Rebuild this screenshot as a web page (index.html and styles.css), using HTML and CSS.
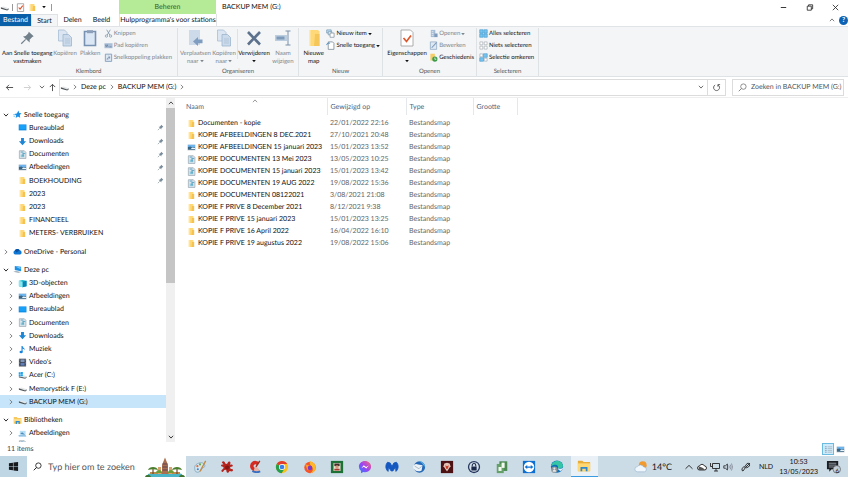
FILE: index.html
```html
<!DOCTYPE html>
<html lang="nl">
<head>
  <meta charset="UTF-8" />
  <meta name="viewport" content="width=device-width, initial-scale=1" />
  <title>BACKUP MEM (G:)</title>
  <link rel="stylesheet" href="styles.css">
</head>
<body>

  <!-- shared icons -->
  <svg class="sprite" aria-hidden="true">
    <symbol id="i-folder" viewBox="0 0 10 10"><path d="M2 1h4.5l.8.8V9H2z" fill="#ffd978"/><path d="M5.5 3.2H8V9H5z" fill="#f6c250"/><path d="M2 1h1v8H2z" fill="#ffe7a6"/></symbol>
    <symbol id="i-picture" viewBox="0 0 10 10"><path d="M.5 1.5h9v7h-9z" fill="#d7dde2"/><path d="M1 2h8v3H1z" fill="#6cb4ee"/><path d="M1 4.4l3-.6 2 1.4 3-.4V7.6H1z" fill="#3a6685"/><path d="M4.5 5.6H9v1.2H5z" fill="#eaf5fb"/></symbol>
    <symbol id="i-document" viewBox="0 0 10 10"><path d="M1.5.8H7L8.8 2.6v6.8H1.5z" fill="#dfe7ec" stroke="#8c9ca7" stroke-width=".7"/><path d="M3 2.3h3M5 3.8h3" stroke="#3f97bd" stroke-width=".9"/><path d="M3 5h4v3H3z" fill="#8fcbe0"/><path d="M5.6 4.2v3" stroke="#2d7f9f" stroke-width=".8"/></symbol>
    <symbol id="i-desktop" viewBox="0 0 10 10"><path d="M.8 1.6h8.6v6.6H.8z" fill="#0d87e0"/><path d="M1.4 2.2h7.4v4.9H1.4z" fill="#16a0f8"/></symbol>
    <symbol id="i-download" viewBox="0 0 10 10"><path d="M3.4 1h3.2v3.6H9L5 9.2 1 4.6h2.4z" fill="#1e86d6"/></symbol>
    <symbol id="i-star" viewBox="0 0 10 10"><path d="M6 .6l.9 2.6 2.6.5-2 1.8.5 3-2.5-1.3L3 8.8l.5-2.6-2-1.8 2.8-.6z" fill="#1a8fe6"/><path d="M.2 5.2h2.3M.6 7h1.8" stroke="#55b4f2" stroke-width=".8"/></symbol>
    <symbol id="i-cloud" viewBox="0 0 10 10"><path d="M2.4 8.4A2.3 2.3 0 0 1 2 4 3 3 0 0 1 7.4 3.6 2.5 2.5 0 0 1 8 8.4z" fill="#0f78d4"/><path d="M2 4A3 3 0 0 1 7.4 3.6L4 6z" fill="#0a4fa3"/></symbol>
    <symbol id="i-pc" viewBox="0 0 10 10"><path d="M2 1l7 1v5l-7-1.4z" fill="#1c8fe3"/><path d="M2.6 1.7l5.8.9v2z" fill="#72c4fa"/><path d="M.3 7.5l3-1 5.5 1.2-2.6 1.3z" fill="#a9b7c0"/></symbol>
    <symbol id="i-cube" viewBox="0 0 10 10"><path d="M1 2l4-1 4.5 1v6L5 9.3 1 8z" fill="#21bccd"/><path d="M5 3l4.5-1v6L5 9.3z" fill="#0a84b6"/><path d="M1 2l4 1v6.3L1 8z" fill="#8be6ef"/></symbol>
    <symbol id="i-music" viewBox="0 0 10 10"><path d="M4.5 1v6.5" stroke="#1784dd" stroke-width="1.2"/><path d="M4.5.8C5 3 8 3 7.3 6 7 4.8 6 4.3 4.5 4z" fill="#1784dd"/><ellipse cx="3.5" cy="7.8" rx="1.8" ry="1.4" fill="#1784dd"/></symbol>
    <symbol id="i-video" viewBox="0 0 10 10"><path d="M1 .8h8v8.6H1z" fill="#3a3f4a"/><path d="M2.8 1.5h4.5v3H2.8z" fill="#8398bd"/><path d="M2.8 5.3h4.5v3.2H2.8z" fill="#5c7cba"/><path d="M1.8 1.2v8M8.2 1.2v8" stroke="#c6ccd4" stroke-width=".6" stroke-dasharray=".8"/></symbol>
    <symbol id="i-drive" viewBox="0 0 10 10"><path d="M1 4.8l3-1 5.6 2L8 7.2z" fill="#e3e6e8"/><path d="M1 4.8L8 7.2l1.6-1.4v1.3L8 8.4 1 6.3z" fill="#4d5357"/></symbol>
    <symbol id="i-windrive" viewBox="0 0 10 10"><path d="M1 4.8l3-1 5.6 2L8 7.2z" fill="#e3e6e8"/><path d="M1 5.8L8 7.4l1.6-1.2v1L8 8.7 1 7.2z" fill="#5b6368"/><path d="M.8 1.4h2v2h-2zM3.1 1.2h2.3v2.2H3.1zM.8 3.7h2v2h-2zM3.1 3.7h2.3v2.2H3.1z" fill="#1fa3ea"/></symbol>
    <symbol id="i-library" viewBox="0 0 10 10"><path d="M.8 1.2h3.4l.8 1h4.3v6.5H.8z" fill="#f7c95c"/><path d="M.8 3.5h8.5V6H.8z" fill="#ffdf8c"/><path d="M3 9V5.5h4.5V9H6.2V7H4.4v2z" fill="#2f8bd0"/></symbol>
    <symbol id="i-pictures" viewBox="0 0 10 10"><path d="M2 2h6.5v4.5H2z" fill="#b8def6"/><path d="M2.5 5.5l2-2 3.5 3z" fill="#4d8cba"/><path d="M.5 7h8l.8 1.3H1z" fill="#6fb0dc"/></symbol>
    <symbol id="i-pin" viewBox="0 0 10 10"><path d="M6 1.2L9 4l-1 .5L6.3 6.2 6.2 8 2.2 4l1.8-.2L5.6 2.2z" fill="#788c9b"/><path d="M3.8 6.2L1.2 8.8" stroke="#788c9b" stroke-width=".9"/></symbol>
    <symbol id="i-right" viewBox="0 0 10 10"><path d="M3 1.5L6.8 5 3 8.5" fill="none" stroke="currentColor" stroke-width="1.3"/></symbol>
    <symbol id="i-down" viewBox="0 0 10 10"><path d="M1.5 3L5 6.8 8.5 3" fill="none" stroke="currentColor" stroke-width="1.6"/></symbol>
    <symbol id="i-up" viewBox="0 0 10 10"><path d="M1.5 7L5 3.2 8.5 7" fill="none" stroke="currentColor" stroke-width="1.4"/></symbol>
    <symbol id="i-tri" viewBox="0 0 4 4"><path d="M.2 1h3.6L2 3.2z" fill="currentColor"/></symbol>
    <symbol id="i-search" viewBox="0 0 10 10"><circle cx="6" cy="4" r="3" fill="none" stroke="currentColor" stroke-width=".9"/><path d="M3.9 6.1L.8 9.2" stroke="currentColor" stroke-width="1"/></symbol>
    <symbol id="i-copy" viewBox="0 0 16 18"><path d="M1.5 1h6l2.5 2.5V12H1.5z" fill="#dbe6f2" stroke="#a9bed4" stroke-width=".8"/><path d="M6 5.5h5.5L14.5 8.5V17H6z" fill="#cbdbeb" stroke="#9db5ce" stroke-width=".8"/><path d="M8 10h5M8 12h5M8 14h5" stroke="#a9bed4" stroke-width=".7"/></symbol>
  </svg>

  <header class="titlebar">
    <div class="quick">
      <svg class="ico"><use href="#i-drive"/></svg>
      <span class="bar"></span>
      <button aria-label="Eigenschappen"><svg class="ico" viewBox="0 0 10 10"><path d="M1.5.8h7v8.6h-7z" fill="#fff" stroke="#8b8b8b" stroke-width=".8"/><path d="M3 5l1.5 1.8L7.5 3" fill="none" stroke="#e0562b" stroke-width="1.3"/></svg></button>
      <button aria-label="Nieuwe map"><svg class="ico"><use href="#i-folder"/></svg></button>
      <button aria-label="Aanpassen"><svg class="tri"><use href="#i-tri"/></svg></button>
      <span class="bar"></span>
    </div>
    <div class="context">Beheren</div>
    <h1>BACKUP MEM (G:)</h1>
    <div class="window-buttons">
      <button aria-label="Minimaliseren"><svg class="ico" viewBox="0 0 10 10"><path d="M2 5h6" stroke="#222"/></svg></button>
      <button aria-label="Verkleinen"><svg class="ico" viewBox="0 0 10 10"><path d="M2.5 3.5h4.5V8H2.5zM4 3.5V2h4.5v4.5H7" fill="none" stroke="#222" stroke-width=".9"/></svg></button>
      <button aria-label="Sluiten"><svg class="ico" viewBox="0 0 10 10"><path d="M2 2l6 6M8 2L2 8" stroke="#222" stroke-width=".9"/></svg></button>
    </div>
  </header>

  <nav class="tabs">
    <button class="tab file">Bestand</button>
    <button class="tab active">Start</button>
    <button class="tab">Delen</button>
    <button class="tab">Beeld</button>
    <button class="tab tools">Hulpprogramma's voor stations</button>
    <div class="help">
      <button aria-label="Lint inklappen"><svg class="chev"><use href="#i-up"/></svg></button>
      <button class="question" aria-label="Help">?</button>
    </div>
  </nav>

  <section class="ribbon">
    <div class="group clipboard">
      <div class="tools-row">
        <button class="big wide"><svg viewBox="0 0 18 18"><path d="M11 2l5.5 5-1.6.8-3 3.2.2 3L4.5 7.2l3-.4L10.3 4z" fill="#72808b"/><path d="M7.5 10.5L2.5 15.5" stroke="#72808b" stroke-width="1.3"/></svg><span>Aan Snelle toegang<br>vastmaken</span></button>
        <button class="big off"><svg viewBox="0 0 16 18"><use href="#i-copy"/></svg><span>Kopiëren</span></button>
        <button class="big off"><svg viewBox="0 0 16 18"><path d="M2.5 2.5h11v14h-11z" fill="#dbe7f5" stroke="#7892b4" stroke-width="1.6"/><path d="M5 1.2h6v3H5z" fill="#8d9fb8"/></svg><span>Plakken</span></button>
        <div class="smalls">
          <button class="off"><svg class="ico" viewBox="0 0 10 10"><path d="M3 .8l3.5 6M7 .8l-3.5 6" stroke="#7f95ad" stroke-width=".9"/><circle cx="2.7" cy="7.8" r="1.3" fill="none" stroke="#7f95ad" stroke-width=".8"/><circle cx="7.3" cy="7.8" r="1.3" fill="none" stroke="#7f95ad" stroke-width=".8"/></svg>Knippen</button>
          <button class="off"><svg class="ico" viewBox="0 0 10 10"><path d="M.5 2.5h9v5.5h-9z" fill="#a9bed6"/><path d="M1.5 4l1 2.5L3.5 4l1 2.5M6 6.5h2.5" fill="none" stroke="#5b7698" stroke-width=".7"/></svg>Pad kopiëren</button>
          <button class="off"><svg class="ico" viewBox="0 0 10 10"><path d="M1.5 1.3h7v8h-7z" fill="#dde8f3" stroke="#7892b4" stroke-width=".9"/><path d="M3.5 7.5c0-2 1-2.5 2.5-2.5M5 3.5L6.8 5 5 6.5" fill="none" stroke="#5b7698" stroke-width=".8"/></svg>Snelkoppeling plakken</button>
        </div>
      </div>
      <div class="caption">Klembord</div>
    </div>

    <div class="group organise">
      <div class="tools-row">
        <button class="big off"><svg viewBox="0 0 16 18"><path d="M2 1h11v15H2z" fill="#ccdae9"/><path d="M15.5 10.5H11V8l-5 4.5 5 4.5v-2.7h4.5z" fill="#7f9dc0"/></svg><span>Verplaatsen<br>naar <svg class="tri"><use href="#i-tri"/></svg></span></button>
        <button class="big off"><svg viewBox="0 0 16 18"><use href="#i-copy"/></svg><span>Kopiëren<br>naar <svg class="tri"><use href="#i-tri"/></svg></span></button>
        <span class="split"></span>
        <button class="big"><svg viewBox="0 0 16 18"><path d="M2 3l12 12.5M14 3L2 15.5" stroke="#5d728d" stroke-width="2.6"/></svg><span>Verwijderen<br><svg class="tri"><use href="#i-tri"/></svg></span></button>
        <button class="big off"><svg viewBox="0 0 16 18"><path d="M0 6h12v6H0z" fill="#bccde0"/><path d="M1.5 7.5h8v3h-8z" fill="#7e9abb"/><path d="M10.5 2h5M13 2v14M10.5 16h5" stroke="#7d91aa" fill="none"/></svg><span>Naam<br>wijzigen</span></button>
      </div>
      <div class="caption">Organiseren</div>
    </div>

    <div class="group new">
      <div class="tools-row">
        <button class="big"><svg viewBox="0 0 16 18"><path d="M3 1h9l1.5 1.5V17H3z" fill="#ffd978"/><path d="M9 5h4.5v12H8z" fill="#f5c65a"/><path d="M3 1h1.5v16H3z" fill="#ffe9ae"/></svg><span>Nieuwe<br>map</span></button>
        <div class="smalls">
          <button><svg class="ico" viewBox="0 0 10 10"><path d="M.8 1h5v3.5h-5z" fill="#c8dff0" stroke="#5e8baa" stroke-width=".7"/><path d="M2.5 3h4v3.5h-4z" fill="#e8f2f8" stroke="#5e8baa" stroke-width=".7"/><path d="M4.5 4.5H9v4.7H4.5z" fill="#fff" stroke="#6e7f8b" stroke-width=".7"/></svg>Nieuw item <svg class="tri"><use href="#i-tri"/></svg></button>
          <button><svg class="ico" viewBox="0 0 10 10"><path d="M2.5 1h4.8l1.5 1.5v6.8H2.5z" fill="#fff" stroke="#6e7f8b" stroke-width=".8"/><path d="M.8 4.5C1 2 3 2 4.5 2.5" fill="none" stroke="#3985c4" stroke-width="1"/></svg>Snelle toegang <svg class="tri"><use href="#i-tri"/></svg></button>
        </div>
      </div>
      <div class="caption">Nieuw</div>
    </div>

    <div class="group open">
      <div class="tools-row">
        <button class="big"><svg viewBox="0 0 16 18"><path d="M2 1h9.5L14 3.5V17H2z" fill="#fff" stroke="#9b9b9b" stroke-width=".8"/><path d="M4.5 9l3 3.5L12 6.5" fill="none" stroke="#e0562b" stroke-width="1.7"/></svg><span>Eigenschappen<br><svg class="tri"><use href="#i-tri"/></svg></span></button>
        <div class="smalls">
          <button class="off"><svg class="ico" viewBox="0 0 10 10"><path d="M2 1h5v8H2z" fill="#a7bdd5"/><path d="M3 3h2M3 5h2M3 7h2" stroke="#eef3f8" stroke-width=".8"/><path d="M6 5h3.5v4H6z" fill="#7e9abb"/></svg>Openen <svg class="tri"><use href="#i-tri"/></svg></button>
          <button class="off"><svg class="ico" viewBox="0 0 10 10"><path d="M1.5 1h7v8.3h-7z" fill="#dfe9f3" stroke="#8aa4c0" stroke-width=".8"/><path d="M3 7.5L8.5 1.5" stroke="#7e9abb" stroke-width="1.2"/></svg>Bewerken</button>
          <button><svg class="ico" viewBox="0 0 10 10"><path d="M1.5.8h5v7.5h-5z" fill="#f7cd68"/><circle cx="6.5" cy="6.7" r="2.9" fill="#3d9b4a"/><path d="M6.5 5v2h1.6" fill="none" stroke="#fff" stroke-width=".8"/></svg>Geschiedenis</button>
        </div>
      </div>
      <div class="caption">Openen</div>
    </div>

    <div class="group select">
      <div class="tools-row">
        <div class="smalls">
          <button><svg class="ico" viewBox="0 0 10 10"><path d="M.8.8h3.8v3.8H.8zM5.4.8h3.8v3.8H5.4zM.8 5.4h3.8v3.8H.8zM5.4 5.4h3.8v3.8H5.4z" fill="#76c3ee" stroke="#3d93c8" stroke-width=".6"/></svg>Alles selecteren</button>
          <button><svg class="ico" viewBox="0 0 10 10"><path d="M1 1h3.2v3.2H1zM5.8 1H9v3.2H5.8zM1 5.8h3.2V9H1zM5.8 5.8H9V9H5.8z" fill="#fff" stroke="#a3a9ae" stroke-width=".7"/></svg>Niets selecteren</button>
          <button><svg class="ico" viewBox="0 0 10 10"><path d="M1 1h3.2v3.2H1zM5.8 5.8H9V9H5.8z" fill="#fff" stroke="#92a6b5" stroke-width=".7"/><path d="M5 .8h4.2v4H5zM.8 5.2h4.2v4H.8z" fill="#76c3ee" stroke="#3d93c8" stroke-width=".6"/></svg>Selectie omkeren</button>
        </div>
      </div>
      <div class="caption">Selecteren</div>
    </div>
  </section>

  <div class="navbar">
    <div class="arrows">
      <button aria-label="Terug"><svg class="ico" viewBox="0 0 10 10"><path d="M9 5H1.5M4.5 2L1.5 5l3 3" fill="none" stroke="#444"/></svg></button>
      <button aria-label="Vooruit"><svg class="ico" viewBox="0 0 10 10"><path d="M1 5h7.5M5.5 2l3 3-3 3" fill="none" stroke="#ccc"/></svg></button>
      <button class="narrow" aria-label="Recente locaties"><svg class="chev"><use href="#i-down"/></svg></button>
      <button class="narrow" aria-label="Omhoog"><svg class="ico" viewBox="0 0 10 10"><path d="M5 9V1.5M2 4.5l3-3 3 3" fill="none" stroke="#444"/></svg></button>
    </div>
    <div class="address">
      <svg class="ico"><use href="#i-drive"/></svg>
      <svg class="chev"><use href="#i-right"/></svg>
      <a href="#">Deze pc</a>
      <svg class="chev"><use href="#i-right"/></svg>
      <a href="#">BACKUP MEM (G:)</a>
      <svg class="chev"><use href="#i-right"/></svg>
      <button class="history" aria-label="Vorige locaties"><svg class="chev"><use href="#i-down"/></svg></button>
      <button class="refresh" aria-label="Vernieuwen"><svg class="ico" viewBox="0 0 10 10"><path d="M3.5 2.2A3.3 3.3 0 1 0 6.8 2.3M6.5 4V1.8H9" fill="none" stroke="#444" stroke-width=".9"/></svg></button>
    </div>
    <label class="search">
      <svg class="ico"><use href="#i-search"/></svg>
      <input type="text" placeholder="Zoeken in BACKUP MEM (G:)" aria-label="Zoeken in BACKUP MEM (G:)">
    </label>
  </div>

  <main>
    <aside>
      <ul class="tree">
        <li><svg class="chev dark"><use href="#i-down"/></svg><svg class="ico"><use href="#i-star"/></svg><a href="#">Snelle toegang</a></li>
        <li class="sub"><svg class="ico"><use href="#i-desktop"/></svg><a href="#">Bureaublad</a><svg class="pin"><use href="#i-pin"/></svg></li>
        <li class="sub"><svg class="ico"><use href="#i-download"/></svg><a href="#">Downloads</a><svg class="pin"><use href="#i-pin"/></svg></li>
        <li class="sub"><svg class="ico"><use href="#i-document"/></svg><a href="#">Documenten</a><svg class="pin"><use href="#i-pin"/></svg></li>
        <li class="sub"><svg class="ico"><use href="#i-picture"/></svg><a href="#">Afbeeldingen</a><svg class="pin"><use href="#i-pin"/></svg></li>
        <li class="sub"><svg class="ico"><use href="#i-folder"/></svg><a href="#">BOEKHOUDING</a><svg class="pin"><use href="#i-pin"/></svg></li>
        <li class="sub"><svg class="ico"><use href="#i-folder"/></svg><a href="#">2023</a></li>
        <li class="sub"><svg class="ico"><use href="#i-folder"/></svg><a href="#">2023</a></li>
        <li class="sub"><svg class="ico"><use href="#i-folder"/></svg><a href="#">FINANCIEEL</a></li>
        <li class="sub"><svg class="ico"><use href="#i-folder"/></svg><a href="#">METERS- VERBRUIKEN</a></li>
        <li class="root"><svg class="chev"><use href="#i-right"/></svg><svg class="ico"><use href="#i-cloud"/></svg><a href="#">OneDrive - Personal</a></li>
        <li class="root"><svg class="chev dark"><use href="#i-down"/></svg><svg class="ico"><use href="#i-pc"/></svg><a href="#">Deze pc</a></li>
        <li class="child"><svg class="chev"><use href="#i-right"/></svg><svg class="ico"><use href="#i-cube"/></svg><a href="#">3D-objecten</a></li>
        <li class="child"><svg class="chev"><use href="#i-right"/></svg><svg class="ico"><use href="#i-picture"/></svg><a href="#">Afbeeldingen</a></li>
        <li class="child"><svg class="chev"><use href="#i-right"/></svg><svg class="ico"><use href="#i-desktop"/></svg><a href="#">Bureaublad</a></li>
        <li class="child"><svg class="chev"><use href="#i-right"/></svg><svg class="ico"><use href="#i-document"/></svg><a href="#">Documenten</a></li>
        <li class="child"><svg class="chev"><use href="#i-right"/></svg><svg class="ico"><use href="#i-download"/></svg><a href="#">Downloads</a></li>
        <li class="child"><svg class="chev"><use href="#i-right"/></svg><svg class="ico"><use href="#i-music"/></svg><a href="#">Muziek</a></li>
        <li class="child"><svg class="chev"><use href="#i-right"/></svg><svg class="ico"><use href="#i-video"/></svg><a href="#">Video's</a></li>
        <li class="child"><svg class="chev"><use href="#i-right"/></svg><svg class="ico"><use href="#i-windrive"/></svg><a href="#">Acer (C:)</a></li>
        <li class="child"><svg class="chev"><use href="#i-right"/></svg><svg class="ico"><use href="#i-drive"/></svg><a href="#">Memorystick F (E:)</a></li>
        <li class="child selected"><svg class="chev"><use href="#i-right"/></svg><svg class="ico"><use href="#i-drive"/></svg><a href="#">BACKUP MEM (G:)</a></li>
        <li class="root"><svg class="chev dark"><use href="#i-down"/></svg><svg class="ico"><use href="#i-library"/></svg><a href="#">Bibliotheken</a></li>
        <li class="child"><svg class="chev"><use href="#i-right"/></svg><svg class="ico"><use href="#i-pictures"/></svg><a href="#">Afbeeldingen</a></li>
        <li class="sub cut"><svg class="ico"><use href="#i-document"/></svg></li>
      </ul>
      <div class="scrollbar">
        <button aria-label="Omhoog schuiven"><svg class="chev"><use href="#i-up"/></svg></button>
        <div class="track"><div class="thumb"></div></div>
        <button aria-label="Omlaag schuiven"><svg class="chev"><use href="#i-down"/></svg></button>
      </div>
    </aside>

    <div class="files">
      <table>
        <thead>
          <tr><th class="name">Naam<svg class="sort"><use href="#i-up"/></svg></th><th class="date">Gewijzigd op</th><th class="type">Type</th><th class="size">Grootte</th><th></th></tr>
        </thead>
        <tbody>
          <tr><td><svg class="ico"><use href="#i-folder"/></svg>Documenten - kopie</td><td>22/01/2022 22:16</td><td>Bestandsmap</td><td></td><td></td></tr>
          <tr><td><svg class="ico"><use href="#i-folder"/></svg>KOPIE AFBEELDINGEN 8 DEC.2021</td><td>27/10/2021 20:48</td><td>Bestandsmap</td><td></td><td></td></tr>
          <tr><td><svg class="ico"><use href="#i-picture"/></svg>KOPIE AFBEELDINGEN 15 januari 2023</td><td>15/01/2023 13:52</td><td>Bestandsmap</td><td></td><td></td></tr>
          <tr><td><svg class="ico"><use href="#i-document"/></svg>KOPIE DOCUMENTEN 13 Mei 2023</td><td>13/05/2023 10:25</td><td>Bestandsmap</td><td></td><td></td></tr>
          <tr><td><svg class="ico"><use href="#i-document"/></svg>KOPIE DOCUMENTEN 15 januari 2023</td><td>15/01/2023 13:42</td><td>Bestandsmap</td><td></td><td></td></tr>
          <tr><td><svg class="ico"><use href="#i-document"/></svg>KOPIE DOCUMENTEN 19 AUG 2022</td><td>19/08/2022 15:36</td><td>Bestandsmap</td><td></td><td></td></tr>
          <tr><td><svg class="ico"><use href="#i-folder"/></svg>KOPIE DOCUMENTEN 08122021</td><td>3/08/2021 21:08</td><td>Bestandsmap</td><td></td><td></td></tr>
          <tr><td><svg class="ico"><use href="#i-folder"/></svg>KOPIE F PRIVE 8 December 2021</td><td>8/12/2021 9:38</td><td>Bestandsmap</td><td></td><td></td></tr>
          <tr><td><svg class="ico"><use href="#i-folder"/></svg>KOPIE F PRIVE 15 januari 2023</td><td>15/01/2023 13:25</td><td>Bestandsmap</td><td></td><td></td></tr>
          <tr><td><svg class="ico"><use href="#i-folder"/></svg>KOPIE F PRIVE 16 April 2022</td><td>16/04/2022 16:10</td><td>Bestandsmap</td><td></td><td></td></tr>
          <tr><td><svg class="ico"><use href="#i-folder"/></svg>KOPIE F PRIVE 19 augustus 2022</td><td>19/08/2022 15:06</td><td>Bestandsmap</td><td></td><td></td></tr>
        </tbody>
      </table>
    </div>
  </main>

  <div class="status">
    <span>11 items</span>
    <div class="views">
      <button class="on" aria-label="Details"><svg class="ico" viewBox="0 0 10 10"><path d="M1 2h2M1 4h2M1 6h2M1 8h2" stroke="#6d8fa6" stroke-width=".8"/><path d="M4 2h5M4 4h5M4 6h5M4 8h5" stroke="#8f9ba3" stroke-width=".6"/></svg></button>
      <button aria-label="Grote pictogrammen"><svg class="ico"><use href="#i-picture"/></svg></button>
    </div>
  </div>

  <footer class="taskbar">
    <button class="start" aria-label="Start"><svg viewBox="0 0 12 12"><path d="M1 2.4l4.4-.6v3.9H1zM6 1.7l5-.7v4.7H6zM1 6.3h4.4v3.9L1 9.6zM6 6.3h5V11l-5-.7z" fill="#16191c"/></svg></button>
    <label class="task-search">
      <svg class="glass"><use href="#i-search"/></svg>
      <input type="text" placeholder="Typ hier om te zoeken" aria-label="Typ hier om te zoeken">
      <svg class="scene" viewBox="0 0 42 20"><path d="M4 17c8-3 26-3 34 0v3H4z" fill="#49b5c7"/><path d="M6 15h30v2H6z" fill="#bb8b4e"/><path d="M18 8l3-7.5L24 8v9h-6z" fill="#a86f50"/><path d="M18.5 7h5M18.5 10h5M18.5 13h5" stroke="#5d4250"/><path d="M14 10h3v7h-3zM25 10h3v7h-3z" fill="#d7a26d"/><path d="M9 12v5M33 12v5" stroke="#6b4b2c" stroke-width="1.2"/><path d="M4 13c1-4 9-4 10 0-3-1-7-1-10 0zM28 13c1-4 9-4 10 0-3-1-7-1-10 0z" fill="#4c7f2d"/><path d="M12 16a3 3 0 0 1 6 0zM24 16a3 3 0 0 1 6 0z" fill="#6d9c35"/><path d="M1 20c1-3 5-3 6 0zM35 20c1-3 5-3 6 0z" fill="#3d7430"/></svg>
    </label>
    <div class="apps">
      <button aria-label="Paint"><svg viewBox="0 0 16 16"><path d="M2 8c0-4 9-7 11-3s-2 3-3 5-2 4-5 4-3-3-3-6z" fill="#d7e6ee" stroke="#6e9cb8" stroke-width=".8"/><circle cx="5" cy="7" r="1.2" fill="#e26a3b"/><circle cx="8" cy="5" r="1.2" fill="#67a844"/><circle cx="5.5" cy="10.5" r="1.2" fill="#3c82cf"/><path d="M14.5 1L8 13" stroke="#c28a42" stroke-width="1.5"/></svg></button>
      <button aria-label="Irfan"><svg viewBox="0 0 16 16"><path d="M2 2.5q2-2 3.5 0L6 4l2 .5L9.5 2q2-1 2.5 1l-.5 2.5 2-.5q2 1 .5 2.5L11.5 8l.5 2 2.5.5q1 2-1 2.5L11 12.5 10 14q-2 1.5-2.5-.5L7 11l-2 .5-1.5 2q-2 .5-2-1.5L4 9.5V8L1.5 7q-1-2 1-2L4 5z" fill="#b5231d"/><path d="M6 7l3-1 2 2-2 3-3-1z" fill="#851612"/></svg></button>
      <button aria-label="CCleaner"><svg viewBox="0 0 16 16"><path d="M11.5 4.5A4 4 0 1 0 11 10" fill="none" stroke="#d52b22" stroke-width="4"/><path d="M13.5 1L9 8" stroke="#a3301f" stroke-width="1.6"/><path d="M8 7.5l3 1 2.500 4q-4 1.500-7-.5z" fill="#e5b2a8"/><path d="M5 12.500q4 2.500 9 .5" stroke="#3a6fc0" stroke-width="2" fill="none"/></svg></button>
      <button aria-label="Chrome"><svg viewBox="0 0 16 16"><circle cx="8" cy="8" r="7" fill="#fbc116"/><path d="M8 8L1.9 4.5A7 7 0 0 1 14 4.5H8z" fill="#e33b2e"/><path d="M8 8L1.9 4.5A7 7 0 0 0 7.5 15L11 9.7z" fill="#289e4b"/><circle cx="8" cy="8" r="3.5" fill="#fff"/><circle cx="8" cy="8" r="2.7" fill="#3b7de9"/></svg></button>
      <button aria-label="Firefox"><svg viewBox="0 0 16 16"><circle cx="8" cy="8.5" r="6.5" fill="#f5532d"/><path d="M8 1c5 2 7 5 6.3 9A6.5 6.5 0 0 1 8 15c4-2 4-5 2-8-2-1-3-3-2-6z" fill="#ffb928"/><path d="M2 4l2 1.5L8 6l-1 2 3 1a3 3 0 0 1-5 2z" fill="#ff9b25"/><circle cx="8" cy="9" r="2.6" fill="#7b3bc6"/></svg></button>
      <button aria-label="Kaartspel"><svg viewBox="0 0 16 16"><path d="M1 1h14v14H1z" fill="#1e7136"/><path d="M4 3.5h8v9H4z" fill="#ece4d7"/><path d="M5 4h6v3H5z" fill="#442d28"/><circle cx="8" cy="8" r="2" fill="#d59b7d"/><path d="M5 10h6v2H5z" fill="#a8392f"/></svg></button>
      <button aria-label="Messenger"><svg viewBox="0 0 16 16"><defs><linearGradient id="msg" x1="0" y1="1" x2="1" y2="0"><stop offset="0" stop-color="#2282ff"/><stop offset=".5" stop-color="#9d43f3"/><stop offset="1" stop-color="#ff6a70"/></linearGradient></defs><path d="M8 1c4 0 7 2.8 7 6.5S12 14 8 14l-2-.2L3.5 15v-2.4A6.2 6.2 0 0 1 1 7.5C1 3.8 4 1 8 1z" fill="url(#msg)"/><path d="M3.8 9.5L6.5 6l2.8 2 2.9-1.8L9.5 9.7l-2.8-2z" fill="#fff"/></svg></button>
      <button aria-label="Malwarebytes"><svg viewBox="0 0 16 16"><path d="M3.500 13C0 10 .5 5 3 2.500l3 1L8 7.500l2-4 3-1c2.500 2.500 3 7.500-.5 10.500L12 8 9 12.500H7L4 8z" fill="#1558c0" stroke="#1558c0" stroke-linejoin="round"/></svg></button>
      <button aria-label="Thunderbird"><svg viewBox="0 0 16 16"><circle cx="8.500" cy="8" r="6.500" fill="#2568b5"/><path d="M1 8c1-4 4-4 6-3l5 1-1 6c-4 2-8 1-10-4z" fill="#edf2f6"/><path d="M3 7l5 3 3-3" fill="none" stroke="#a0b2c2"/><path d="M7 1c5 0 8 4 8 7l-2-2C12 3 9 2 7 1z" fill="#58b6ec"/></svg></button>
      <button aria-label="Brave"><svg viewBox="0 0 16 16"><path d="M1 1h14v14H1z" fill="#4b1113"/><path d="M5 4l3-1 3 1 1 3-4 6-4-6z" fill="#e3c2b5"/><path d="M6 6l2 1 2-1-1 4H7z" fill="#ca3c25"/></svg></button>
      <button aria-label="KeePass"><svg viewBox="0 0 16 16"><circle cx="8" cy="8" r="7" fill="#27395f"/><circle cx="8" cy="8" r="5.5" fill="#d4dfea"/><path d="M5 7.5h6V12H5z" fill="#1b294b"/><path d="M6 7.5V6a2 2 0 0 1 4 0v1.5" fill="none" stroke="#1b294b" stroke-width="1.2"/></svg></button>
      <button aria-label="Patience"><svg viewBox="0 0 16 16"><path d="M5 1.500h9v11H5z" fill="#4a8a50"/><path d="M2 4.500h8v10.500H2z" fill="#64a068"/><path d="M7.500 3h3.500v6H7.500z" fill="#f3f8f3"/><path d="M4 8h3.500v4.500H4z" fill="#f3f8f3"/></svg></button>
      <button aria-label="TeamViewer"><svg viewBox="0 0 16 16"><path d="M1 1h14v14H1z" fill="#0d6fd1"/><circle cx="8" cy="8" r="6" fill="#fff"/><path d="M3 8l3-2.3v1.6h4V5.7L13 8l-3 2.3V8.8H6v1.5z" fill="#0d6fd1"/></svg></button>
      <button aria-label="Edge"><svg viewBox="0 0 16 16"><circle cx="8" cy="7.5" r="7" fill="#0b70b9"/><path d="M1.2 7C2 2 7 0 11 1.5c3 1.5 4 4 3.8 6C14 10 10 10 9 9c1-3-2-5-7.800-2z" fill="#35c4a4"/><path d="M9 9c1 1.500 4 1.500 6-.5-.5 2-1.500 3-2.500 4C10 12 9 10.500 9 9z" fill="#e5f1f6"/><circle cx="5" cy="11" r="3.600" fill="#8b9499"/><circle cx="5" cy="9.800" r="1.200" fill="#e4e7e9"/><path d="M3 13.500c0-3 4-3 4 0z" fill="#e4e7e9"/></svg></button>
      <button class="running" aria-label="Verkenner"><svg viewBox="0 0 16 16"><path d="M1 2h5l1.5 1.5H15V14H1z" fill="#e8ac38"/><path d="M1 5h14v9H1z" fill="#ffd874"/><path d="M4 14V9h8v5h-2v-3H6v3z" fill="#2d88d1"/></svg></button>
    </div>
    <div class="tray">
      <button class="weather"><svg viewBox="0 0 16 16"><circle cx="10" cy="6" r="4.5" fill="#f29a2e"/><path d="M4 13.5a3 3 0 0 1 0-6 4 4 0 0 1 7 .5 2.8 2.8 0 0 1 1 5.5z" fill="#eff6fc" stroke="#8aaccc" stroke-width=".6"/></svg>14°C</button>
      <div class="tray-icons">
        <button aria-label="Verborgen pictogrammen"><svg viewBox="0 0 10 10"><path d="M1.5 6.8L5 3.4l3.5 3.4" fill="none" stroke="#222" stroke-width=".9"/></svg></button>
        <button aria-label="OneDrive"><svg viewBox="0 0 10 10"><path d="M2.5 8a2 2 0 0 1 0-4 2.7 2.7 0 0 1 5 0 2 2 0 0 1 0 4z" fill="#fff" stroke="#222" stroke-width=".9"/><path d="M2.5 8a2 2 0 0 1 0-3.5L6 6l2 2z" fill="#555"/></svg></button>
        <button aria-label="Netwerk"><svg viewBox="0 0 10 10"><path d="M2.5 1.5h7v5h-7zM6 6.5V9M4 9h4M.5 1v3.5h2" fill="none" stroke="#222" stroke-width=".9"/></svg></button>
        <button aria-label="Geluid"><svg viewBox="0 0 10 10"><path d="M.8 3.8h1.6l2-1.8v6l-2-1.8H.8z" fill="none" stroke="#222" stroke-width=".8"/><path d="M5.8 3.5q1 1.5 0 3M7.2 2.6q1.8 2.4 0 4.8M8.5 1.5q2 3.5 0 7" fill="none" stroke="#667" stroke-width=".6"/></svg></button>
        <button class="pen" aria-label="Pen"><svg viewBox="0 0 10 10"><path d="M9 1L5 5M6 1.5q3-1 2.5 2.5L5.5 6 4 4.5zM4.5 5.5L2 9q-1.5 0-1-2.5 2-3 3.5-1z" fill="none" stroke="#222" stroke-width=".9"/></svg></button>
      </div>
      <button class="lang">NLD</button>
      <button class="clock">10:53<br>13/05/2023</button>
      <button class="notes" aria-label="Meldingen"><svg viewBox="0 0 16 16"><path d="M1 2h12v9H6l-2.5 2.5V11H1z" fill="#1b1e21"/><path d="M3 4.5h8M3 6.5h8M3 8.5h5" stroke="#c7d6e0" stroke-width=".7"/><circle cx="11.5" cy="11" r="4" fill="#c3ced6" stroke="#555" stroke-width=".7"/></svg><span class="badge">6</span></button>
    </div>
  </footer>

</body>
</html>
```
FILE: styles.css
```css
* {
  box-sizing: border-box;
}

body {
  margin: 0;
  height: 100vh;
  display: flex;
  flex-direction: column;
  overflow: hidden;
  font-family: Lato, "Open Sans", sans-serif;
  font-size: 7px;
  line-height: 8px;
  text-rendering: geometricPrecision;
  color: #111;
  background: #fff;
}

button, input {
  font: inherit;
  text-rendering: inherit;
  color: inherit;
  border: 0;
  padding: 0;
  margin: 0;
  background: none;
}

button {
  display: flex;
  align-items: center;
  justify-content: center;
  white-space: nowrap;
}

input:focus {
  outline: none;
}

a {
  color: inherit;
  text-decoration: none;
  white-space: nowrap;
}

svg {
  display: block;
  flex: none;
}

.sprite {
  display: none;
}

.ico {
  width: 9px;
  height: 9px;
}

.chev {
  width: 6px;
  height: 6px;
  color: #666;
}

.dark {
  color: #222;
}

.tri {
  display: inline-block;
  width: 4px;
  height: 4px;
}

/* title bar */
.titlebar {
  display: flex;
  height: 14px;
  flex: none;
}

.quick {
  width: 119px;
  display: flex;
  align-items: center;
  gap: 3px;
}

.quick .tri {
  margin: 0 2px;
}

.bar {
  width: 1px;
  height: 7px;
  background: #999;
}

.context {
  width: 97px;
  background: #b5ea96;
  color: #3c5c2c;
  text-align: center;
  line-height: 14px;
}

h1 {
  flex: 1;
  margin: 0 0 0 6px;
  font-size: 7px;
  font-weight: normal;
  line-height: 14px;
}

.window-buttons {
  display: flex;
}

.window-buttons button {
  width: 26px;
}

/* tabs */
.tabs {
  display: flex;
  height: 12px;
  flex: none;
}

.tab {
  width: 29px;
}

.tab.file {
  width: 31px;
  background: #0a5fa9;
  color: #fff;
}

.tab.active {
  width: 27px;
  background: #f3f5f7;
  border: 1px solid #dfe2e4;
  border-bottom: 0;
}

.tab.tools {
  width: 98px;
  margin-left: 3px;
  border-left: 1px solid #e0e3e5;
  border-right: 1px solid #e0e3e5;
}

.help {
  margin-left: auto;
  display: flex;
  align-items: center;
  gap: 4px;
}

.question {
  width: 9px;
  height: 9px;
  border-radius: 50%;
  background: #0c62b4;
  color: #fff;
  font-weight: bold;
}

/* ribbon */
.ribbon {
  display: flex;
  height: 51px;
  flex: none;
  background: #f3f5f7;
  border-top: 1px solid #e1e4e6;
  border-bottom: 1px solid #dfe2e4;
  font-size: 6px;
}

.group {
  display: flex;
  flex-direction: column;
  justify-content: space-between;
  border-right: 1px solid #dfe2e5;
  margin: 1px 0 0;
}

.clipboard { width: 178px; }
.organise { width: 121px; }
.new { width: 84px; }
.open { width: 94px; }
.select { width: 62px; }

.tools-row {
  display: flex;
  padding: 1px 2px 0;
}

.caption {
  text-align: center;
  color: #555;
}

.big {
  flex: 1;
  flex-direction: column;
  justify-content: flex-start;
}

.big.wide {
  flex: 2;
}

.big > svg {
  width: 16px;
  height: 18px;
  margin-bottom: 3px;
}

.off {
  color: #80868c;
}

.smalls {
  display: flex;
  flex-direction: column;
  gap: 3px;
}

.clipboard .smalls {
  margin: 0 3px 0 1px;
}

.smalls button {
  justify-content: flex-start;
  gap: 1px;
}

.split {
  width: 1px;
  height: 30px;
  background: #dfe2e5;
}

/* address row */
.navbar {
  display: flex;
  align-items: center;
  height: 21px;
  flex: none;
  padding-right: 4px;
  border-bottom: 1px solid #eceeef;
}

.arrows {
  display: flex;
  width: 59px;
}

.arrows button {
  width: 18px;
}

.arrows .narrow {
  width: 11px;
}

.address {
  flex: 1;
  display: flex;
  align-items: center;
  gap: 3px;
  height: 17px;
  border: 1px solid #dcdcdc;
}

.history {
  margin-left: auto;
}

.refresh {
  width: 18px;
  height: 15px;
  border-left: 1px solid #dcdcdc;
}

.search {
  width: 112px;
  height: 17px;
  margin-left: 6px;
  padding-left: 5px;
  display: flex;
  align-items: center;
  gap: 4px;
  border: 1px solid #dcdcdc;
  color: #777;
}

.search input {
  flex: 1;
  min-width: 0;
}

input::placeholder {
  color: #555;
  opacity: 1;
}

/* folder tree */
main {
  flex: 1;
  min-height: 0;
  display: flex;
}

aside {
  width: 175px;
  display: flex;
}

.tree {
  flex: 1;
  margin: 0;
  padding: 10px 0 0;
  list-style: none;
  display: flex;
  flex-direction: column;
  overflow: hidden;
}

.tree li {
  flex: 1;
  min-height: 0;
  display: flex;
  align-items: center;
  padding-left: 3px;
}

.tree .ico {
  margin: 0 2px 0 4px;
}

.tree .sub {
  padding-left: 13px;
}

.tree .child {
  padding-left: 8px;
}

.tree .sub .ico {
  margin-left: 5px;
}

.tree .root {
  margin-top: 5px;
}

.tree .selected {
  background: #c6e5fb;
}

.tree .cut {
  flex: 0 0 2px;
  align-items: flex-start;
}

.pin {
  width: 7px;
  height: 7px;
  margin: 0 2px 0 auto;
}

.scrollbar {
  width: 9px;
  display: flex;
  flex-direction: column;
  background: #f0f0f0;
}

.scrollbar button {
  height: 10px;
}

.scrollbar .chev {
  color: #333;
}

.track {
  flex: 1;
}

.thumb {
  height: 54%;
  background: #c5c5c5;
}

/* file list */
.files {
  flex: 1;
}

table {
  border-collapse: collapse;
  table-layout: fixed;
  width: 100%;
}

th {
  height: 17px;
  padding: 0 0 0 3px;
  border-right: 1px solid #e4e8eb;
  font-weight: normal;
  text-align: left;
  color: #4f6580;
}

th:last-child {
  border: 0;
}

.name { width: 152px; padding-left: 11px; position: relative; }
.date { width: 79px; }
.type { width: 67px; }
.size { width: 44px; }

.sort {
  position: absolute;
  top: 0;
  left: 77px;
  width: 6px;
  height: 6px;
  color: #888;
}

tbody::before {
  content: "";
  display: block;
  height: 2px;
}

td {
  height: 12px;
  padding: 0 0 0 3px;
  color: #666;
  white-space: nowrap;
}

td:first-child {
  padding-left: 12px;
  color: #111;
}

td .ico {
  display: inline-block;
  vertical-align: middle;
  margin-right: 2px;
}

/* status bar */
.status {
  display: flex;
  justify-content: space-between;
  align-items: center;
  height: 14px;
  flex: none;
  padding: 0 2px 0 7px;
  color: #444;
}

.views {
  display: flex;
}

.views button {
  width: 12px;
  height: 12px;
}

.views .on {
  background: #cfeafb;
  border: 1px solid #6bbbe0;
}

/* taskbar */
.taskbar {
  display: flex;
  height: 21px;
  flex: none;
  background: #ccdce7;
}

.start {
  width: 27px;
  background: #bfd6e4;
}

.start svg {
  width: 11px;
  height: 11px;
}

.task-search {
  width: 159px;
  display: flex;
  align-items: center;
  padding-left: 6px;
  background: #fff;
}

.task-search input {
  flex: 1;
  min-width: 0;
  font-size: 9px;
  line-height: 12px;
}

.glass {
  width: 9px;
  height: 9px;
  margin-right: 6px;
}

.scene {
  width: 42px;
  height: 20px;
}

.apps {
  flex: 0 1 412px;
  display: flex;
}

.apps button {
  flex: 1;
}

.apps svg {
  width: 14px;
  height: 14px;
}

.apps .running {
  background: #eaf1f6;
  border-bottom: 1px solid #3a9be0;
}

.tray {
  margin-left: auto;
  display: flex;
}

.weather {
  gap: 4px;
  font-size: 9px;
  margin-right: 12px;
}

.weather svg {
  width: 14px;
  height: 14px;
}

.tray-icons {
  display: flex;
  gap: 3px;
}

.tray-icons svg {
  width: 10px;
  height: 10px;
}

.pen {
  margin-left: 5px;
}

.lang {
  margin-left: 8px;
}

.clock {
  margin-left: 6px;
  line-height: 10px;
}

.notes {
  width: 30px;
  position: relative;
}

.notes svg {
  width: 15px;
  height: 15px;
}

.badge {
  position: absolute;
  right: 9px;
  bottom: 2px;
  font-size: 6px;
  line-height: 7px;
}
```
